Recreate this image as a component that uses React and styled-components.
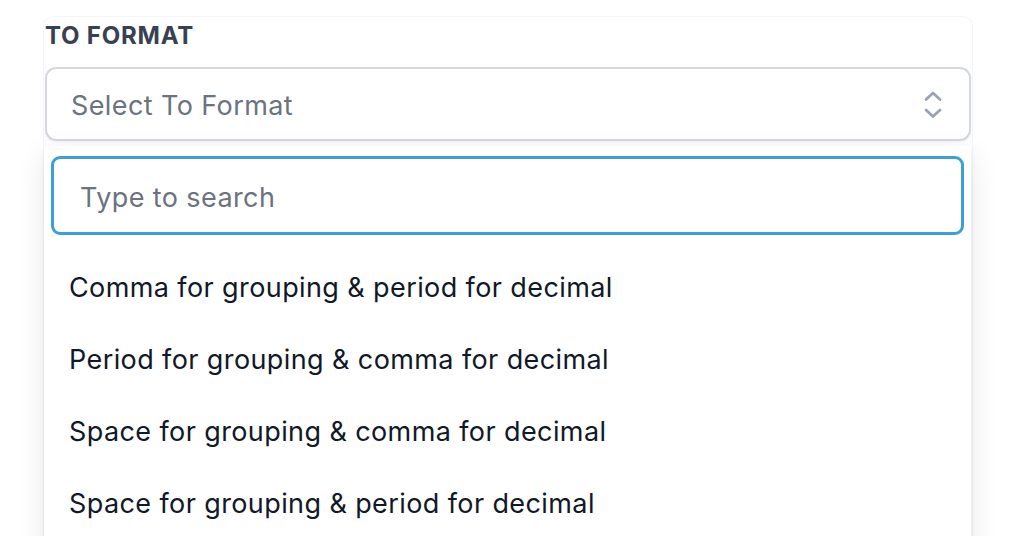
import React from 'react'
import styled, { createGlobalStyle } from 'styled-components'

const GlobalStyle = createGlobalStyle`
  * {
    box-sizing: border-box;
  }
  body {
    margin: 0;
    background: #ffffff;
    font-family: Inter, "Noto Sans", sans-serif;
    overflow: hidden;
  }
`

const Page = styled.div`
  height: 536px;
  padding: 16px 43px 0 43px;
  overflow: hidden;
`

const Card = styled.div`
  height: 100%;
  border: 1px solid #f5f6f8;
  border-bottom: none;
  border-radius: 10px 10px 0 0;
  padding: 0 0 0 1px;
`

const Label = styled.div`
  margin-top: 5px;
  font-size: 24px;
  font-weight: 700;
  letter-spacing: 0.8px;
  color: #374151;
  line-height: 28px;
`

const Field = styled.div`
  position: relative;
  margin-top: 17px;
  margin-right: 1px;
`

const SelectBox = styled.div`
  height: 74px;
  border: 2px solid #d5d8de;
  border-radius: 11px;
  box-shadow: 0 1px 3px rgba(0, 0, 0, 0.06);
  display: flex;
  align-items: center;
  justify-content: space-between;
  padding: 2px 26px 0 24px;
  font-size: 27px;
  letter-spacing: 0.4px;
  color: #6b7280;
`

const Chevron = styled.svg`
  width: 20px;
  height: 32px;
  flex-shrink: 0;
`

const Dropdown = styled.div`
  position: absolute;
  left: -1px;
  right: 0;
  top: calc(100% + 5px);
  height: 420px;
  background: #ffffff;
  box-shadow: 0 8px 28px rgba(0, 0, 0, 0.09), 0 2px 6px rgba(0, 0, 0, 0.04);
  padding: 10px 7px 0 7px;
`

const SearchInput = styled.input`
  display: block;
  width: 100%;
  height: 79px;
  border: 3px solid #3b9fd8;
  border-radius: 9px;
  outline: none;
  padding: 3px 26px 0 26px;
  font-family: inherit;
  font-size: 27px;
  letter-spacing: 0.4px;
  color: #111827;

  &::placeholder {
    color: #6b7280;
  }
`

const OptionList = styled.ul`
  list-style: none;
  margin: 16px 0 0 0;
  padding: 0;
`

const Option = styled.li`
  height: 72px;
  display: flex;
  align-items: center;
  padding-left: 18px;
  font-size: 27px;
  letter-spacing: 0.4px;
  color: #111827;
`

const options = [
  'Comma for grouping & period for decimal',
  'Period for grouping & comma for decimal',
  'Space for grouping & comma for decimal',
  'Space for grouping & period for decimal',
]

export default function App() {
  return (
    <>
      <GlobalStyle />
      <Page>
        <Card>
          <Label>TO FORMAT</Label>
          <Field>
            <SelectBox>
              <span>Select To Format</span>
              <Chevron viewBox="0 0 20 32" fill="none" stroke="#9ca3af" strokeWidth="2.8" strokeLinecap="round" strokeLinejoin="round">
                <polyline points="3,10.5 10,4 17,10.5" />
                <polyline points="3,21 10,27.5 17,21" />
              </Chevron>
            </SelectBox>
            <Dropdown>
              <SearchInput placeholder="Type to search" />
              <OptionList>
                {options.map((o) => (
                  <Option key={o}>{o}</Option>
                ))}
              </OptionList>
            </Dropdown>
          </Field>
        </Card>
      </Page>
    </>
  )
}
